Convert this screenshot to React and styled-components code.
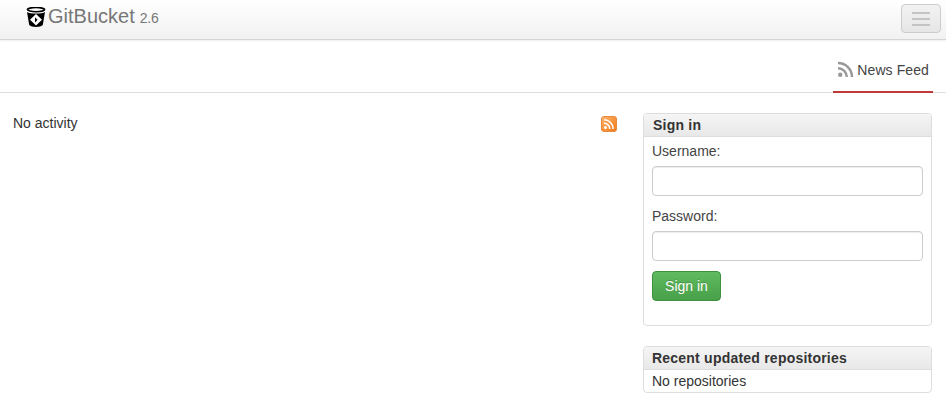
import React from 'react';
import styled, { createGlobalStyle } from 'styled-components';

const GlobalStyle = createGlobalStyle`
    html, body {
        margin: 0;
        padding: 0;
        background: #fff;
    }
    body {
        font-family: "Liberation Sans", Arial, sans-serif;
        font-size: 14px;
        line-height: 20px;
        color: #333;
    }
    * {
        box-sizing: border-box;
    }
`;

const Page = styled.div`
    width: 946px;
    height: 414px;
    overflow: hidden;
`;

const Navbar = styled.header`
    height: 40px;
    display: flex;
    align-items: flex-start;
    justify-content: space-between;
    padding: 0 5px 0 26px;
    background: linear-gradient(to bottom, #ffffff, #f1f1f1);
    border-bottom: 1px solid #d4d4d4;
    box-shadow: 0 1px 2px rgba(0, 0, 0, 0.07);
`;

const Brand = styled.a`
    display: flex;
    align-items: baseline;
    color: #777;
    font-size: 20px;
    line-height: 20px;
    padding-top: 6px;
    svg {
        align-self: flex-start;
        margin: 1px 2px 0 0;
    }
`;

const Version = styled.span`
    font-size: 14px;
    margin-left: 5px;
    letter-spacing: -0.2px;
`;

const MenuButton = styled.button`
    width: 40px;
    height: 29px;
    margin-top: 4px;
    padding: 0;
    display: flex;
    flex-direction: column;
    align-items: center;
    justify-content: center;
    gap: 4px;
    background: linear-gradient(to bottom, #f2f2f2, #e6e6e6);
    border: 1px solid #ccc;
    border-radius: 4px;
    span {
        display: block;
        width: 18px;
        height: 2px;
        background: #c4c4c4;
    }
`;

const TabBar = styled.nav`
    height: 53px;
    display: flex;
    justify-content: flex-end;
    padding-right: 13px;
    border-bottom: 1px solid #ddd;
`;

const Tab = styled.a`
    display: flex;
    align-items: center;
    gap: 3px;
    height: 53px;
    padding: 8px 4px 0;
    color: #444;
    font-size: 14px;
    letter-spacing: 0.1px;
    border-bottom: 2px solid #c0393b;
`;

const Content = styled.main`
    display: grid;
    grid-template-columns: 1fr 289px;
    gap: 26px;
    padding: 20px 14px 0 13px;
`;

const Activity = styled.section`
    display: flex;
    justify-content: space-between;
    align-items: flex-start;
    svg {
        margin-top: 3px;
    }
`;

const Sidebar = styled.aside`
    display: flex;
    flex-direction: column;
    gap: 20px;
`;

const Box = styled.div`
    border: 1px solid #ddd;
    border-radius: 4px;
    overflow: hidden;
`;

const BoxHeader = styled.div`
    height: 23px;
    padding-left: ${props => props.$indent}px;
    font-weight: bold;
    line-height: 23px;
    letter-spacing: 0.22px;
    color: #333;
    background: linear-gradient(to bottom, #f5f5f5, #e8e8e8);
    border-bottom: 1px solid #ddd;
`;

const BoxBody = styled.div`
    padding: ${props => props.$padding};
`;

const Field = styled.label`
    display: block;
    margin-bottom: ${props => props.$gap}px;
`;

const FieldLabel = styled.div`
    height: 20px;
    margin-bottom: 5px;
    color: #444;
`;

const Input = styled.input`
    display: block;
    width: 271px;
    height: 30px;
    padding: 0 10px;
    background: #fff;
    border: 1px solid #ccc;
    border-radius: 4px;
    box-shadow: inset 0 1px 1px rgba(0, 0, 0, 0.075);
`;

const SubmitButton = styled.button`
    display: block;
    width: 69px;
    height: 30px;
    padding: 0;
    color: #fff;
    font-family: inherit;
    font-size: 14px;
    background: linear-gradient(to bottom, #60bb60, #48a048);
    border: 1px solid #3e8f3e;
    border-radius: 4px;
    text-shadow: 0 -1px 0 rgba(0, 0, 0, 0.2);
`;

function BucketLogo() {
    return (
        <svg width="20" height="20" viewBox="0 0 20 20">
            <ellipse cx="10" cy="2.6" rx="8.6" ry="2.1" fill="none" stroke="#000" strokeWidth="1.6" />
            <path d="M1 5 C4 7 16 7 19 5 L16.8 18 C14.5 20.5 5.5 20.5 3.2 18 Z" fill="#000" />
            <path d="M10 7 L16 12.8 L10 18.6 L4 12.8 Z" fill="#fff" />
            <path d="M9 10.2 L11.6 12.8 L9 15.4 Z" fill="#000" />
        </svg>
    );
}

function RssGlyph() {
    return (
        <svg width="17" height="17" viewBox="0 0 17 17">
            <circle cx="3.2" cy="13.8" r="2.2" fill="#999" />
            <path d="M1 7.2 A8.8 8.8 0 0 1 9.8 16" fill="none" stroke="#999" strokeWidth="2.4" />
            <path d="M1 2 A14 14 0 0 1 15 16" fill="none" stroke="#999" strokeWidth="2.4" />
        </svg>
    );
}

function FeedIcon() {
    return (
        <svg width="16" height="16" viewBox="0 0 16 16">
            <defs>
                <linearGradient id="feed" x1="0" y1="0" x2="1" y2="1">
                    <stop offset="0" stopColor="#fdb46b" />
                    <stop offset="1" stopColor="#f27a1a" />
                </linearGradient>
            </defs>
            <rect x="0.5" y="0.5" width="15" height="15" rx="2.5" fill="url(#feed)" stroke="#e8883a" />
            <circle cx="4.5" cy="11.5" r="1.5" fill="#fff" />
            <path d="M3 7.2 A5.8 5.8 0 0 1 8.8 13" fill="none" stroke="#fff" strokeWidth="1.6" />
            <path d="M3 3.8 A9.2 9.2 0 0 1 12.2 13" fill="none" stroke="#fff" strokeWidth="1.6" />
        </svg>
    );
}

export default function App() {
    return (
        <Page>
            <GlobalStyle />
            <Navbar>
                <Brand>
                    <BucketLogo />
                    GitBucket
                    <Version>2.6</Version>
                </Brand>
                <MenuButton>
                    <span />
                    <span />
                    <span />
                </MenuButton>
            </Navbar>
            <TabBar>
                <Tab>
                    <RssGlyph />
                    News Feed
                </Tab>
            </TabBar>
            <Content>
                <Activity>
                    <span>No activity</span>
                    <FeedIcon />
                </Activity>
                <Sidebar>
                    <Box>
                        <BoxHeader $indent={9}>Sign in</BoxHeader>
                        <BoxBody $padding="4px 8px 24px">
                            <Field $gap={10}>
                                <FieldLabel>Username:</FieldLabel>
                                <Input type="text" />
                            </Field>
                            <Field $gap={10}>
                                <FieldLabel>Password:</FieldLabel>
                                <Input type="password" />
                            </Field>
                            <SubmitButton>Sign in</SubmitButton>
                        </BoxBody>
                    </Box>
                    <Box>
                        <BoxHeader $indent={8}>Recent updated repositories</BoxHeader>
                        <BoxBody $padding="1px 8px">No repositories</BoxBody>
                    </Box>
                </Sidebar>
            </Content>
        </Page>
    );
}
